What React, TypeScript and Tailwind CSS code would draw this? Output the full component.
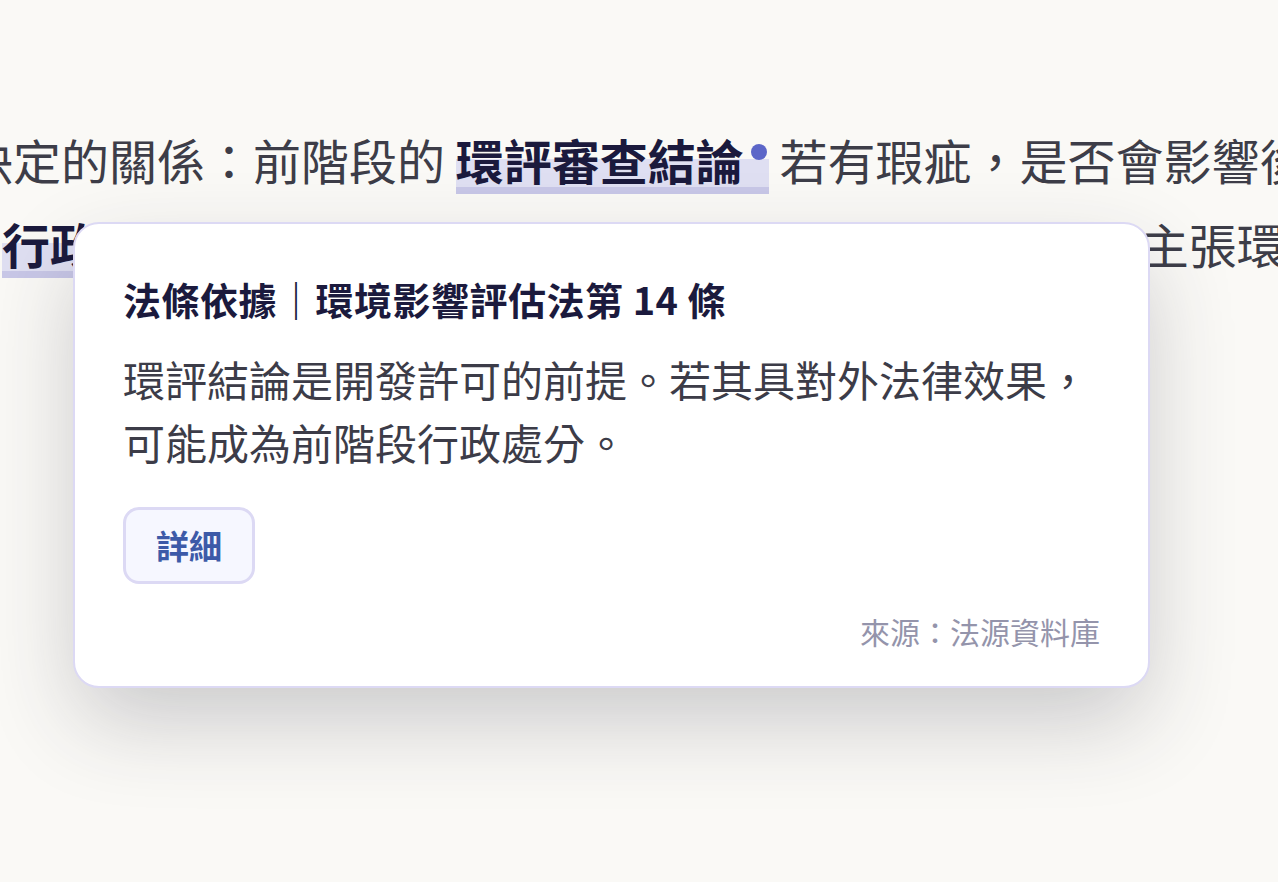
import React from 'react'

const font = { fontFamily: '"Noto Sans CJK TC", "Noto Sans", sans-serif' }

function Mark({ children, dot }: { children: React.ReactNode; dot?: boolean }) {
  return (
    <span className="bg-[linear-gradient(to_bottom,transparent_50%,#dfdff2_50%,#dfdff2_90%,#c8c7e7_90%)] font-bold text-[#1b1a3d]">
      {children}
      {dot && (
        <span className="ml-[7px] mr-[2px] inline-block h-4 w-4 -translate-y-[15px] rounded-full bg-[#5c66c8] align-middle" />
      )}
    </span>
  )
}

export default function App() {
  return (
    <div className="relative h-[882px] w-full overflow-hidden bg-[#faf9f6]" style={font}>
      {/* paragraph behind the popover */}
      <div className="pt-[117px] text-[48px] leading-[84px] whitespace-nowrap text-[#3d3d48]">
        <div className="ml-[-35px]">
          決定的關係：前階段的 <Mark dot>環評審查結論</Mark> 若有瑕疵，是否會影響後續
        </div>
        <div className="ml-[2px]">
          <Mark>行政處分</Mark>」，等到後階段再針對開發許可的 <Mark>撤銷訴訟</Mark>中主張環評
        </div>
      </div>

      {/* popover card */}
      <div className="absolute left-[73px] top-[222px] w-[1077px] rounded-[26px] border-2 border-[#dcd9f4] bg-white px-[48px] pt-[48px] pb-[34px] shadow-[0_36px_90px_-6px_rgba(40,40,60,0.24)]">
        <div className="text-[38px] leading-[53px] font-bold tracking-[0.5px] text-[#1b1a3d]">
          法條依據｜環境影響評估法第 14 條
        </div>
        <p className="mt-[22px] text-[42px] leading-[63px] text-[#3c3c48]">
          環評結論是開發許可的前提。若其具對外法律效果，可能成為前階段行政處分。
        </p>
        <div className="mt-[34px] flex">
          <button className="rounded-[16px] border-[3px] border-[#dcd9f4] bg-[#f6f7ff] px-[30px] py-[14px] text-[33px] leading-[43px] font-bold text-[#3d5aa8]" style={font}>
            詳細
          </button>
        </div>
        <div className="mt-[26px] text-right text-[30px] leading-[42px] text-[#9494ab]">
          來源：法源資料庫
        </div>
      </div>
    </div>
  )
}
